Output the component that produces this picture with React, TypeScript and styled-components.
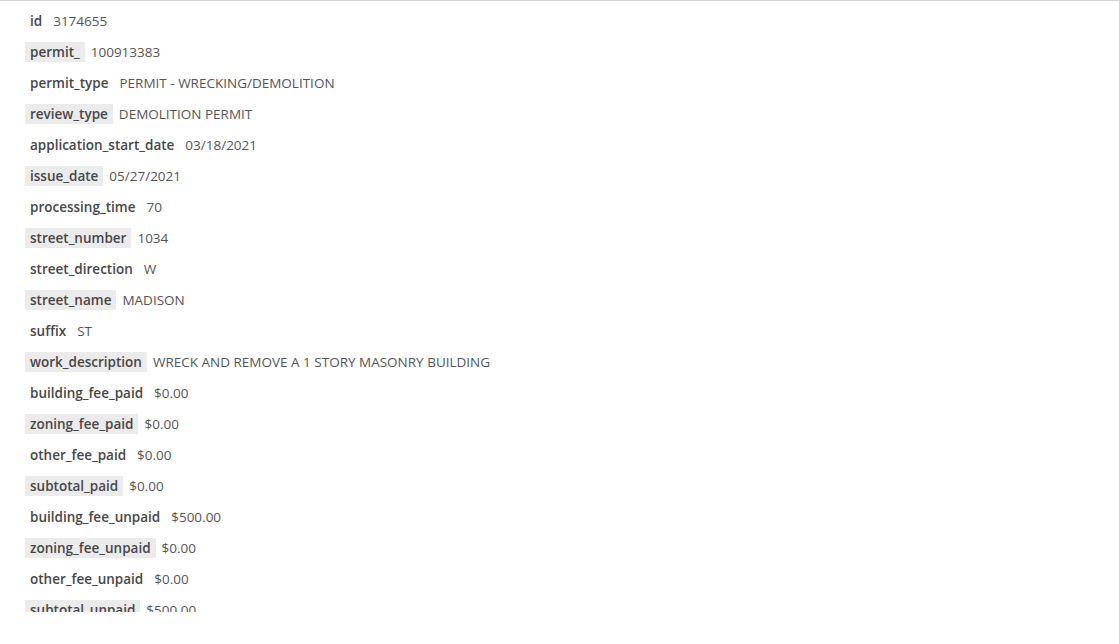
import React from "react";
import styled, { createGlobalStyle } from "styled-components";

const Global = createGlobalStyle`
  html, body { margin: 0; padding: 0; background: #fff; }
  body { font-family: "Open Sans", "Liberation Sans", sans-serif; }
`;

const Panel = styled.div`
  border-top: 1px solid #d4d4d4;
  height: 612px;
  overflow: hidden;
  box-sizing: border-box;
  padding: 10px 0 0 25px;
  display: flex;
  flex-direction: column;
  gap: 11px;
`;

const Row = styled.div`
  display: flex;
  align-items: center;
  gap: 6px;
  font-size: 13.5px;
  line-height: 20px;
  white-space: nowrap;
`;

const Key = styled.span<{ $shaded: boolean }>`
  padding: 0 5px;
  font-weight: 600;
  color: #474747;
  background: ${(p) => (p.$shaded ? "#ebebeb" : "transparent")};
`;

const Value = styled.span`
  color: #555;
  font-weight: 400;
`;

const data: [string, string][] = [
  ["id", "3174655"],
  ["permit_", "100913383"],
  ["permit_type", "PERMIT - WRECKING/DEMOLITION"],
  ["review_type", "DEMOLITION PERMIT"],
  ["application_start_date", "03/18/2021"],
  ["issue_date", "05/27/2021"],
  ["processing_time", "70"],
  ["street_number", "1034"],
  ["street_direction", "W"],
  ["street_name", "MADISON"],
  ["suffix", "ST"],
  ["work_description", "WRECK AND REMOVE A 1 STORY MASONRY BUILDING"],
  ["building_fee_paid", "$0.00"],
  ["zoning_fee_paid", "$0.00"],
  ["other_fee_paid", "$0.00"],
  ["subtotal_paid", "$0.00"],
  ["building_fee_unpaid", "$500.00"],
  ["zoning_fee_unpaid", "$0.00"],
  ["other_fee_unpaid", "$0.00"],
  ["subtotal_unpaid", "$500.00"],
];

export default function App() {
  return (
    <>
      <Global />
      <Panel>
        {data.map(([k, v], i) => (
          <Row key={k}>
            <Key $shaded={i % 2 === 1}>{k}</Key>
            <Value>{v}</Value>
          </Row>
        ))}
      </Panel>
    </>
  );
}
